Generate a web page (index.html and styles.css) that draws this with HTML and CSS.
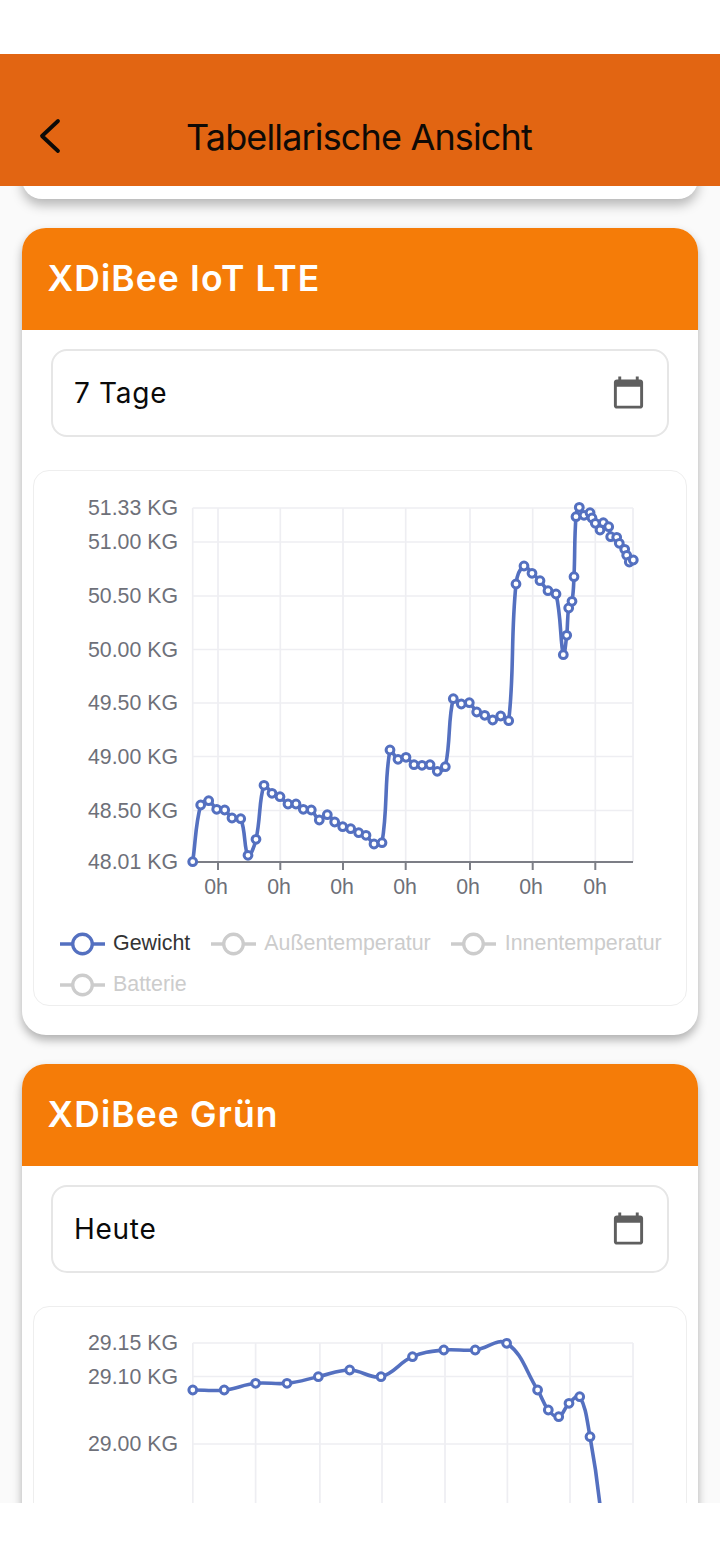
FILE: index.html
```html
<!DOCTYPE html>
<html lang="de">
<head>
<meta charset="utf-8">
<title>Tabellarische Ansicht</title>
<link rel="stylesheet" href="styles.css">
</head>
<body>
<div class="status"></div>
<header class="appbar">
  <svg class="back" viewBox="0 0 24 36"><path d="M21 3 L5 18 L21 33"/></svg>
  <h1 class="title">Tabellarische Ansicht</h1>
</header>
<main class="content">
  <div class="card-stub"></div>

  <section class="card">
    <h2 class="card-head">XDiBee IoT LTE</h2>
    <div class="card-body">
      <div class="select">
        <span class="select-text">7 Tage</span>
        <svg class="cal" viewBox="0 0 24 24"><path d="M20 3h-1V1h-2v2H7V1H5v2H4c-1.1 0-2 .9-2 2v16c0 1.1.9 2 2 2h16c1.1 0 2-.9 2-2V5c0-1.1-.9-2-2-2zm0 18H4V8h16v13z"/></svg>
      </div>
      <div class="chart">
        <svg class="plot plot-a" viewBox="33 470 654 450">
          <g class="grid">
            <path d="M192.7 508V862M218 508V862M280.3 508V862M343 508V862M405.7 508V862M470 508V862M532.7 508V862M595.3 508V862M633 508V862"/>
            <path d="M192.7 508H633M192.7 542H633M192.7 596H633M192.7 649.5H633M192.7 703H633M192.7 756.5H633M192.7 810.5H633"/>
          </g>
          <path class="axis" d="M192.7 862H633M218 862V870M280.3 862V870M343 862V870M405.7 862V870M470 862V870M532.7 862V870M595.3 862V870"/>
          <g class="ylabels">
            <text x="178" y="508">51.33 KG</text>
            <text x="178" y="542">51.00 KG</text>
            <text x="178" y="596">50.50 KG</text>
            <text x="178" y="649.5">50.00 KG</text>
            <text x="178" y="703">49.50 KG</text>
            <text x="178" y="756.5">49.00 KG</text>
            <text x="178" y="810.5">48.50 KG</text>
            <text x="178" y="862">48.01 KG</text>
          </g>
          <g class="xlabels">
            <text x="216" y="887">0h</text>
            <text x="279" y="887">0h</text>
            <text x="342" y="887">0h</text>
            <text x="405" y="887">0h</text>
            <text x="468" y="887">0h</text>
            <text x="531" y="887">0h</text>
            <text x="595" y="887">0h</text>
          </g>
          <g id="series-a"></g>
        </svg>
        <ul class="legend">
          <li class="legend-item is-on"><svg class="key" viewBox="0 0 46 26"><path d="M0 13H46"/><circle cx="23" cy="13" r="10"/></svg>Gewicht</li>
          <li class="legend-item"><svg class="key" viewBox="0 0 46 26"><path d="M0 13H46"/><circle cx="23" cy="13" r="10"/></svg>Außentemperatur</li>
          <li class="legend-item"><svg class="key" viewBox="0 0 46 26"><path d="M0 13H46"/><circle cx="23" cy="13" r="10"/></svg>Innentemperatur</li>
          <li class="legend-item"><svg class="key" viewBox="0 0 46 26"><path d="M0 13H46"/><circle cx="23" cy="13" r="10"/></svg>Batterie</li>
        </ul>
      </div>
    </div>
  </section>

  <section class="card">
    <h2 class="card-head">XDiBee Grün</h2>
    <div class="card-body">
      <div class="select">
        <span class="select-text">Heute</span>
        <svg class="cal" viewBox="0 0 24 24"><path d="M20 3h-1V1h-2v2H7V1H5v2H4c-1.1 0-2 .9-2 2v16c0 1.1.9 2 2 2h16c1.1 0 2-.9 2-2V5c0-1.1-.9-2-2-2zm0 18H4V8h16v13z"/></svg>
      </div>
      <div class="chart">
        <svg class="plot plot-b" viewBox="33 1306 654 300">
          <g class="grid">
            <path d="M192.8 1343V1600M255.6 1343V1600M319.9 1343V1600M382 1343V1600M445 1343V1600M507.4 1343V1600M570 1343V1600M633 1343V1600"/>
            <path d="M192.8 1343H633M192.8 1376.5H633M192.8 1444H633M192.8 1511H633"/>
          </g>
          <g class="ylabels">
            <text x="178" y="1343">29.15 KG</text>
            <text x="178" y="1376.5">29.10 KG</text>
            <text x="178" y="1444">29.00 KG</text>
            <text x="178" y="1511">28.90 KG</text>
          </g>
          <g id="series-b"></g>
        </svg>
      </div>
    </div>
  </section>
</main>
<div class="navbar"></div>
<script src="chart.js"></script>
</body>
</html>
```
FILE: styles.css
```css
* { box-sizing: border-box; }
html, body { margin: 0; padding: 0; }
body {
  width: 720px;
  height: 1558px;
  display: flex;
  flex-direction: column;
  background: #fff;
  font-family: "Inter", "Liberation Sans", sans-serif;
  overflow: hidden;
}
.status { height: 54px; flex: none; background: #fff; }
.appbar {
  height: 132px;
  flex: none;
  background: #e26512;
  position: relative;
  z-index: 2;
  display: flex;
  align-items: flex-end;
  justify-content: center;
  padding: 0 2px 27px 0;
}
.back {
  position: absolute;
  left: 37px;
  top: 64px;
  width: 24px;
  height: 36px;
  fill: none;
  stroke: #0c0a08;
  stroke-width: 3.8;
  stroke-linecap: round;
  stroke-linejoin: round;
}
.title {
  margin: 0;
  font-weight: 400;
  font-size: 36px;
  line-height: 44px;
  letter-spacing: -0.85px;
  color: #0f0a06;
}
.content {
  flex: none;
  height: 1317px;
  overflow: hidden;
  background: #fafafa;
  padding: 0 22px;
  display: flex;
  flex-direction: column;
  gap: 29px;
}
.card-stub {
  flex: none;
  height: 40px;
  margin-top: -27px;
  background: #fff;
  border-radius: 24px;
  box-shadow: 0 6px 12px rgba(0, 0, 0, .28);
}
.card {
  flex: none;
  background: #fff;
  border-radius: 24px;
  box-shadow: 0 5px 10px rgba(0, 0, 0, .3);
}
.card-head {
  margin: 0;
  height: 102px;
  display: flex;
  align-items: center;
  padding: 0 0 2px 25.5px;
  background: #f57c08;
  border-radius: 24px 24px 0 0;
  color: #fff;
  font-weight: 600;
  font-size: 35.5px;
  letter-spacing: 1.1px;
}
.card-body { padding: 19px 11px 29px; }
.select {
  height: 88px;
  margin: 0 18px 33px;
  border: 2px solid #e6e6e6;
  border-radius: 16px;
  display: flex;
  align-items: center;
  justify-content: space-between;
  padding: 0 21px;
}
.select-text {
  font-size: 28px;
  letter-spacing: 0.7px;
  color: #0a0a0a;
}
.cal { width: 35px; height: 35px; margin-bottom: 2px; fill: #5f5f5f; }
.chart {
  border: 1.5px solid #eeeeee;
  border-radius: 16px;
  background: #fff;
}
.plot { display: block; width: 654px; margin: -1.5px; overflow: hidden; }
.plot-a { height: 450px; }
.plot-b { height: 300px; }
.grid path { fill: none; stroke: #eeeef2; stroke-width: 1.7; }
.axis { fill: none; stroke: #7c7e86; stroke-width: 2; }
.ylabels text, .xlabels text {
  font-family: "Liberation Sans", Arial, sans-serif;
  font-size: 21.3px;
  fill: #6e7079;
  dominant-baseline: central;
}
.ylabels text { text-anchor: end; }
.xlabels text { text-anchor: middle; }
.line { fill: none; stroke: #5470c0; stroke-width: 3.6; stroke-linejoin: round; }
.dot { fill: #fff; stroke: #5470c0; stroke-width: 3; }
.legend {
  list-style: none;
  margin: 0;
  padding: 5px 0 0 25.5px;
  display: flex;
  flex-wrap: wrap;
  column-gap: 20.5px;
  font-family: "Liberation Sans", Arial, sans-serif;
  font-size: 21.4px;
  color: #ccc;
}
.legend-item {
  height: 41px;
  display: flex;
  align-items: center;
  gap: 8.5px;
}
.key { width: 45px; height: 26px; fill: #fff; stroke: #ccc; stroke-width: 3.4; }
.is-on { color: #333; }
.is-on .key { stroke: #5470c0; }
.navbar { height: 55px; flex: none; background: #fff; position: relative; z-index: 2; }
```
FILE: chart.js
```js
var SERIES_A = [[192.7,861.7],[200.7,805],[208.7,800.7],[216.7,809.3],[224.7,810],[232,818],[240.7,818.7],[248,855.3],[256,839.3],[264,785.3],[272,793.3],[280,796.7],[288,804],[296,804],[303.3,809.3],[311.3,810],[319.3,820],[327.3,814.7],[334.7,822],[342.7,826.7],[350.7,828.7],[358.7,832.7],[366,835.3],[374,844],[382,842.7],[390,750],[398,759.3],[406,757.3],[414,764.7],[422,765.3],[430,764.7],[437.3,771.3],[445.3,766.7],[453.3,698.7],[461.3,704],[469.3,702.7],[476.7,712],[484.7,715.3],[492.7,720],[500.7,716],[508.7,720.7],[516,584],[524,566],[532,573.3],[540,580.7],[548,590.7],[556,594],[563.3,654.7],[566.7,635.3],[568.7,608],[572,601.3],[574,576.7],[576,516.7],[579.3,507.3],[584,515.3],[590,512.7],[592,518],[595.3,523.3],[600,530],[603.3,522.7],[608.7,526.7],[610.7,536.7],[616.7,537.3],[619.3,543.3],[624.7,549.3],[626.7,555.3],[629.3,562],[633.3,560]];
var SERIES_B = [[192.8,1390],[224.2,1390],[255.6,1383.3],[287,1383.3],[318.3,1376.7],[349.7,1370],[381,1376.7],[412.5,1356.7],[443.8,1350],[475.2,1350],[506.6,1343.3],[537.6,1390],[548.3,1410],[558.7,1416.7],[569,1403.3],[579.7,1396.7],[590,1436.7],[600.5,1510],[611,1640]];

function drawSeries(id, pts, tension) {
  var NS = 'http://www.w3.org/2000/svg';
  var host = document.getElementById(id);
  var d = 'M' + pts[0][0] + ' ' + pts[0][1];
  function ctrl(i) {
    var p = pts[Math.max(i - 1, 0)], c = pts[i], n = pts[Math.min(i + 1, pts.length - 1)];
    var d1 = Math.hypot(c[0] - p[0], c[1] - p[1]), d2 = Math.hypot(n[0] - c[0], n[1] - c[1]);
    var total = d1 + d2 || 1, fa = tension * d1 / total, fb = tension * d2 / total;
    return {
      ax: c[0] - fa * (n[0] - p[0]), ay: c[1] - fa * (n[1] - p[1]),
      bx: c[0] + fb * (n[0] - p[0]), by: c[1] + fb * (n[1] - p[1])
    };
  }
  for (var i = 1; i < pts.length; i++) {
    var s = ctrl(i - 1), e = ctrl(i);
    d += 'C' + [s.bx, s.by, e.ax, e.ay, pts[i][0], pts[i][1]].map(function (v) { return v.toFixed(1); }).join(' ');
  }
  var line = document.createElementNS(NS, 'path');
  line.setAttribute('class', 'line');
  line.setAttribute('d', d);
  host.appendChild(line);
  pts.forEach(function (pt) {
    var dot = document.createElementNS(NS, 'circle');
    dot.setAttribute('class', 'dot');
    dot.setAttribute('cx', pt[0]);
    dot.setAttribute('cy', pt[1]);
    dot.setAttribute('r', 3.9);
    host.appendChild(dot);
  });
}
drawSeries('series-a', SERIES_A, 0.4);
drawSeries('series-b', SERIES_B, 0.4);
```
